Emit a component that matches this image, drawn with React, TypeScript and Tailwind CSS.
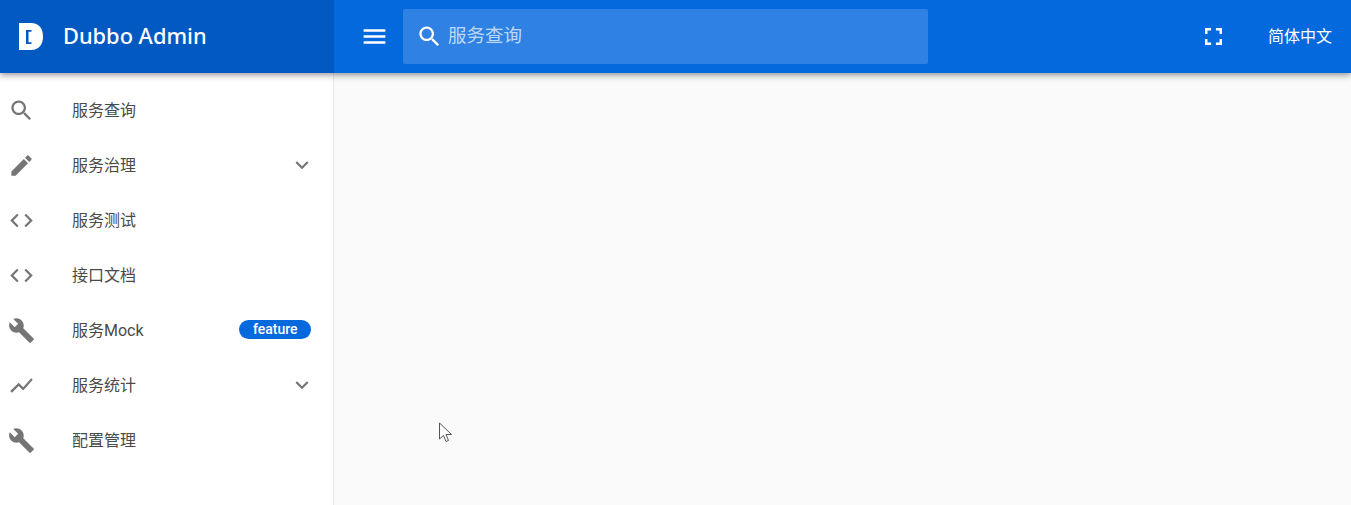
import type { ReactNode } from "react"

const icons = {
  search:
    "M15.5 14h-.79l-.28-.27C15.41 12.59 16 11.11 16 9.5 16 5.91 13.09 3 9.5 3S3 5.91 3 9.5 5.91 16 9.5 16c1.61 0 3.09-.59 4.23-1.57l.27.28v.79l5 4.99L20.49 19l-4.99-5zm-6 0C7.01 14 5 11.99 5 9.5S7.01 5 9.5 5 14 7.01 14 9.5 11.99 14 9.5 14z",
  edit: "M3 17.25V21h3.75L17.81 9.94l-3.75-3.75L3 17.25zM20.71 7.04c.39-.39.39-1.02 0-1.41l-2.34-2.34c-.39-.39-1.02-.39-1.41 0l-1.83 1.83 3.75 3.75 1.83-1.83z",
  code: "M9.4 16.6L4.8 12l4.6-4.6L8 6l-6 6 6 6 1.4-1.4zm5.2 0l4.6-4.6-4.6-4.6L16 6l6 6-6 6-1.4-1.4z",
  build:
    "M22.7 19l-9.1-9.1c.9-2.3.4-5-1.5-6.9-2-2-5-2.4-7.4-1.3L9 6 6 9 1.6 4.7C.4 7.1.9 10.1 2.9 12.1c1.9 1.9 4.6 2.4 6.9 1.5l9.1 9.1c.4.4 1 .4 1.4 0l2.3-2.3c.5-.4.5-1.1.1-1.4z",
  chart: "M3.5 18.49l6-6.01 4 4L22 6.92l-1.41-1.41-7.09 7.97-4-4L2 16.99z",
  down: "M7.41 8.59L12 13.17l4.59-4.58L18 10l-6 6-6-6z",
  menu: "M3 18h18v-2H3v2zm0-5h18v-2H3v2zm0-7v2h18V6H3z",
  fullscreen: "M7 14H5v5h5v-2H7v-3zm-2-4h2V7h3V5H5v5zm12 7h-3v2h5v-5h-2v3zM14 5v2h3v3h2V5h-5z",
}

function Icon({ name, className }: { name: keyof typeof icons; className?: string }) {
  return (
    <svg viewBox="0 0 24 24" fill="currentColor" className={className}>
      <path d={icons[name]} />
    </svg>
  )
}

function NavItem({ icon, label, right }: { icon: keyof typeof icons; label: string; right?: ReactNode }) {
  return (
    <div className="flex h-[55px] items-center pl-[8px] pr-[22px]">
      <Icon name={icon} className="h-[27px] w-[27px] text-[#757575]" />
      <span className="ml-[37px] flex-1 text-base text-[#4a4a4a]">{label}</span>
      {right}
    </div>
  )
}

const chevron = <Icon name="down" className="mb-[2px] mr-[-4px] h-[26px] w-[26px] text-[#757575]" />

export default function App() {
  return (
    <div className="relative flex h-[505px] w-[1351px] flex-col overflow-hidden bg-[#fafafa] font-['Roboto','Noto_Sans_CJK_SC',sans-serif]">
      {/* Toolbar */}
      <header className="z-10 flex h-[73px] shrink-0 items-center bg-[#0569de] text-white shadow-[0_2px_4px_-1px_rgba(0,0,0,0.2),0_4px_5px_0_rgba(0,0,0,0.14),0_1px_10px_0_rgba(0,0,0,0.12)]">
        <div className="flex h-full w-[334px] items-center bg-[#0359c2] pl-[19px]">
          <svg viewBox="0 0 24 27" className="h-[27px] w-[24px]">
            <path
              fillRule="evenodd"
              fill="#fff"
              d="M0 0h12c8 0 12 5.500 12 13.500S20 27 12 27H0zM12.500 7H7v14h5.500v-1.800H9.500V8.800h3z"
            />
          </svg>
          <span className="ml-[20px] font-['Noto_Sans'] text-[21.800px] font-medium">Dubbo Admin</span>
        </div>
        <Icon name="menu" className="ml-[26px] h-[29px] w-[29px]" />
        <div className="ml-[14px] flex h-[55px] w-[525px] items-center rounded-[2px] bg-white/[0.17] pl-[13px]">
          <Icon name="search" className="h-[27px] w-[27px]" />
          <span className="ml-[5px] pt-px text-[18.500px] text-white/70">服务查询</span>
        </div>
        <div className="ml-auto flex items-center pr-[19px]">
          <Icon name="fullscreen" className="h-[29px] w-[29px]" />
          <span className="ml-[40px] text-base">简体中文</span>
        </div>
      </header>

      <div className="flex flex-1">
        {/* Sidebar */}
        <aside className="w-[334px] border-r border-[#e8e8e8] bg-white pt-[10px]">
          <NavItem icon="search" label="服务查询" />
          <NavItem icon="edit" label="服务治理" right={chevron} />
          <NavItem icon="code" label="服务测试" />
          <NavItem icon="code" label="接口文档" />
          <NavItem
            icon="build"
            label="服务Mock"
            right={
              <span className="mb-[2px] rounded-full bg-[#0569de] px-[13.500px] text-[14px] leading-[19px] font-medium text-white">
                feature
              </span>
            }
          />
          <NavItem icon="chart" label="服务统计" right={chevron} />
          <NavItem icon="build" label="配置管理" />
        </aside>
        <main className="flex-1" />
      </div>

      {/* Mouse pointer caught in the capture */}
      <svg viewBox="0 0 16 22" className="absolute left-[438px] top-[422px] h-[22px] w-[16px]">
        <path d="M1.5 1v16l4-3.500 2.500 6 2.500-1-2.500-6h5.500z" fill="#fff" stroke="#555" strokeWidth="1" />
      </svg>
    </div>
  )
}
